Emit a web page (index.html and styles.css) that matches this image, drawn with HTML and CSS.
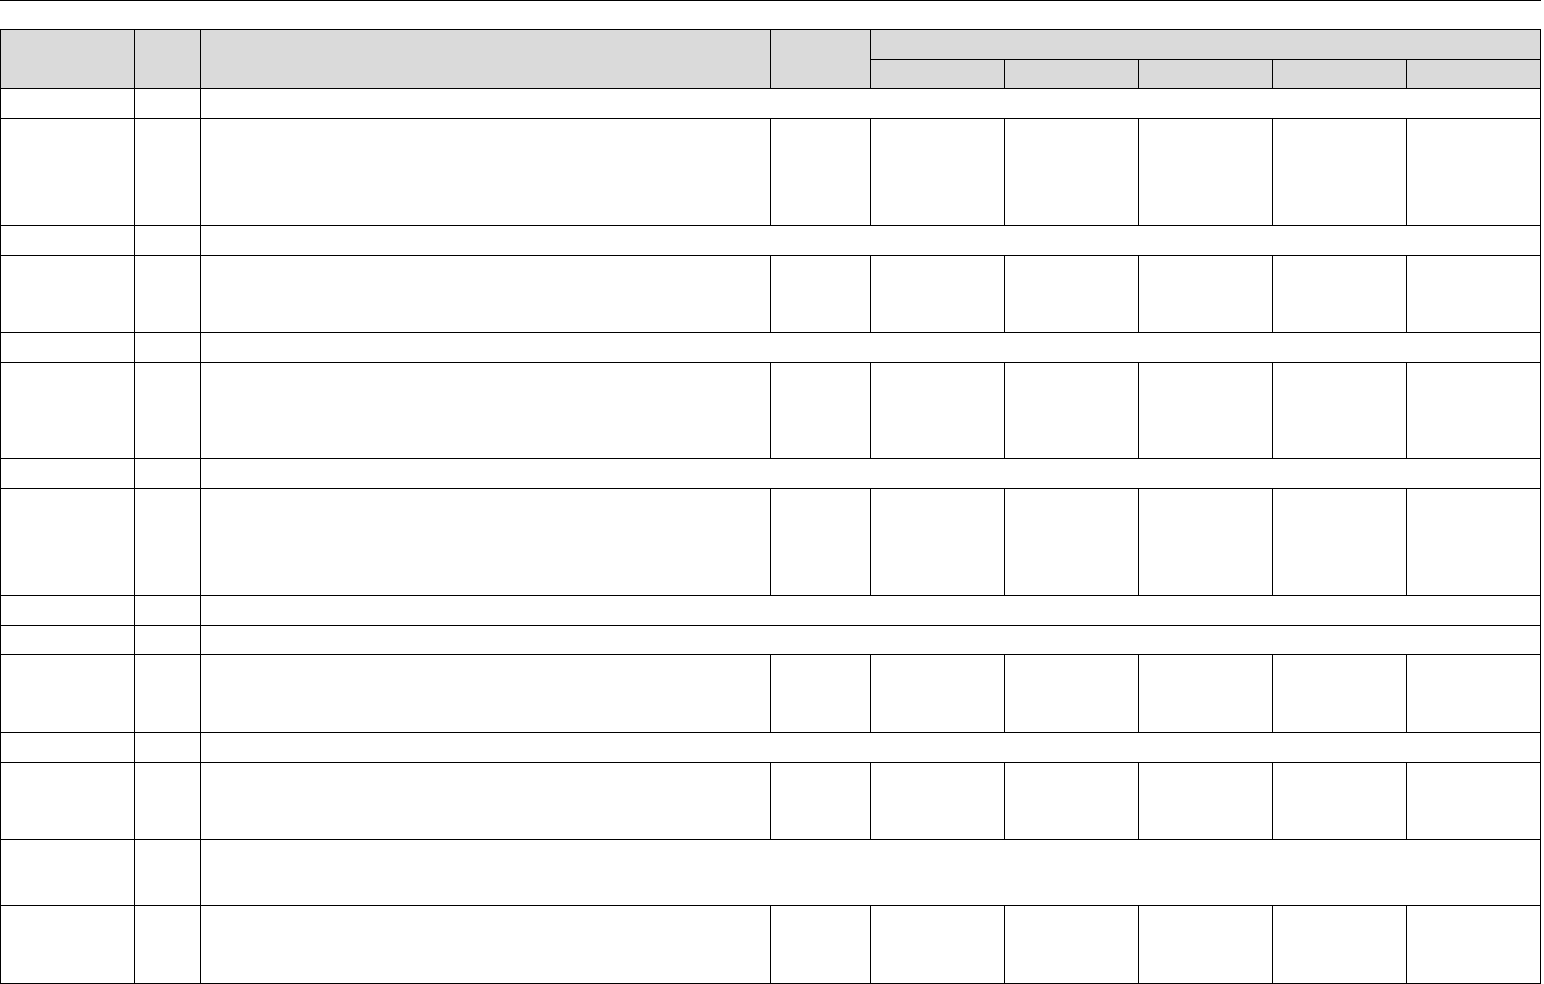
FILE: index.html
```html
<!DOCTYPE html>
<html lang="en">
<head>
<meta charset="utf-8">
<title>Table</title>
<link rel="stylesheet" href="styles.css">
</head>
<body>
<div class="page">
  <div class="rule"></div>
  <div class="sheet" role="table">
    <div class="cell head tall"></div>
    <div class="cell head tall"></div>
    <div class="cell head tall"></div>
    <div class="cell head tall"></div>
    <div class="cell head group"></div>
    <div class="cell head"></div>
    <div class="cell head"></div>
    <div class="cell head"></div>
    <div class="cell head"></div>
    <div class="cell head"></div>

    <div class="cell"></div><div class="cell"></div><div class="cell wide"></div>
    <div class="cell"></div><div class="cell"></div><div class="cell"></div><div class="cell"></div><div class="cell"></div><div class="cell"></div><div class="cell"></div><div class="cell"></div><div class="cell"></div>

    <div class="cell"></div><div class="cell"></div><div class="cell wide"></div>
    <div class="cell"></div><div class="cell"></div><div class="cell"></div><div class="cell"></div><div class="cell"></div><div class="cell"></div><div class="cell"></div><div class="cell"></div><div class="cell"></div>

    <div class="cell"></div><div class="cell"></div><div class="cell wide"></div>
    <div class="cell"></div><div class="cell"></div><div class="cell"></div><div class="cell"></div><div class="cell"></div><div class="cell"></div><div class="cell"></div><div class="cell"></div><div class="cell"></div>

    <div class="cell"></div><div class="cell"></div><div class="cell wide"></div>
    <div class="cell"></div><div class="cell"></div><div class="cell"></div><div class="cell"></div><div class="cell"></div><div class="cell"></div><div class="cell"></div><div class="cell"></div><div class="cell"></div>

    <div class="cell"></div><div class="cell"></div><div class="cell wide"></div>
    <div class="cell"></div><div class="cell"></div><div class="cell wide"></div>
    <div class="cell"></div><div class="cell"></div><div class="cell"></div><div class="cell"></div><div class="cell"></div><div class="cell"></div><div class="cell"></div><div class="cell"></div><div class="cell"></div>

    <div class="cell"></div><div class="cell"></div><div class="cell wide"></div>
    <div class="cell"></div><div class="cell"></div><div class="cell"></div><div class="cell"></div><div class="cell"></div><div class="cell"></div><div class="cell"></div><div class="cell"></div><div class="cell"></div>

    <div class="cell"></div><div class="cell"></div><div class="cell wide"></div>
    <div class="cell"></div><div class="cell"></div><div class="cell"></div><div class="cell"></div><div class="cell"></div><div class="cell"></div><div class="cell"></div><div class="cell"></div><div class="cell"></div>
  </div>
</div>
</body>
</html>
```
FILE: styles.css
```css
html, body {
  margin: 0;
  padding: 0;
  background: #ffffff;
  font-family: "Liberation Sans", Arial, sans-serif;
}

.page {
  width: 1541px;
}

.rule {
  height: 1px;
  background: #000000;
  margin-bottom: 28px;
}

.sheet {
  display: grid;
  grid-template-columns: 133px 65px 569px 99px repeat(5, 133px);
  grid-template-rows: 29px 28px 29px 106px 29px 76px 29px 95px 29px 106px 29px 28px 77px 29px 76px 65px 77px;
  gap: 1px;
  background: #000000;
  border: 1px solid #000000;
  width: max-content;
}

.cell {
  background: #ffffff;
}

.head {
  background: #dadada;
}

.tall {
  grid-row: span 2;
}

.group {
  grid-column: span 5;
}

.wide {
  grid-column: 3 / -1;
}
```
